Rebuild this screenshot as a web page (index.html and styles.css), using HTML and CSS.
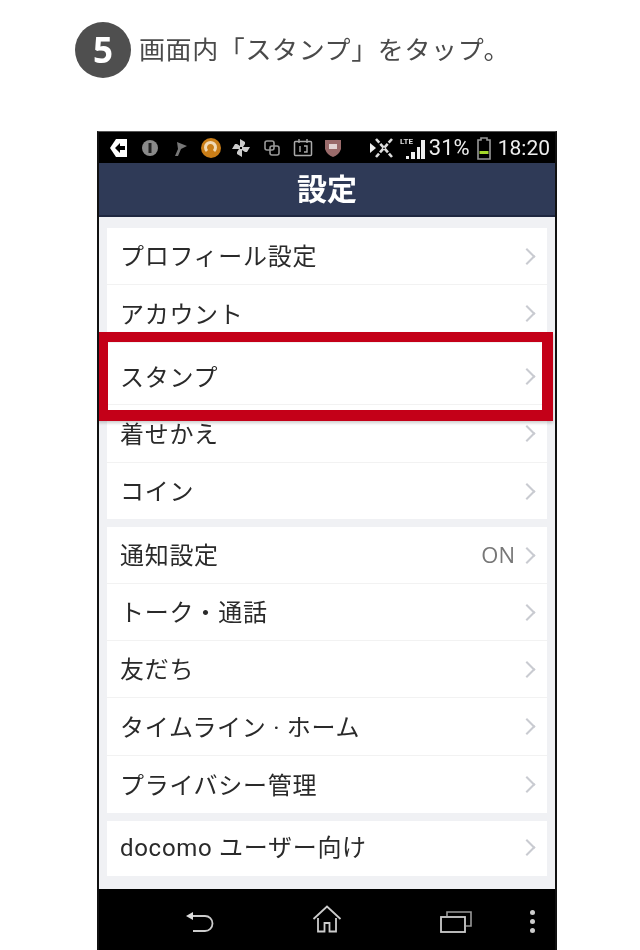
FILE: index.html
```html
<!DOCTYPE html>
<html lang="ja">
<head>
    <meta charset="UTF-8">
    <meta name="viewport" content="width=device-width, initial-scale=1.0">
    <title>スタンプ</title>
    <link rel="stylesheet" href="styles.css">
</head>
<body>
    <div class="step">
        <span class="step-num">5</span>
        <p class="step-text">画面内「スタンプ」をタップ。</p>
    </div>

    <div class="phone">
        <div class="status">
            <div class="status-left">
                <svg viewBox="0 0 20 20"><path d="M7 1h11v18H7l-6-9z" fill="#fff"/><path d="M6 10l5-5v3h5v4h-5v3z" fill="#000"/></svg>
                <svg viewBox="0 0 20 20"><circle cx="10" cy="10" r="8" fill="#8a8a8a"/><rect x="8.500" y="5" width="3" height="10" fill="#222"/></svg>
                <svg viewBox="0 0 20 20"><path d="M5 18l3-7-1-7 10 4-6 3-3 7z" fill="#777"/></svg>
                <svg viewBox="0 0 20 20"><circle cx="10" cy="10" r="10" fill="#c97d17"/><path d="M6 13a5 5 0 1 1 7 0" fill="none" stroke="#f0d9b5" stroke-width="3"/></svg>
                <svg viewBox="0 0 20 20"><path d="M9 9V1l5 3v2l-2 3zM11 9h8l-3 5h-2l-3-2zM11 11v8l-5-3v-2l2-3zM9 11H1l3-5h2l3 2z" fill="#ccc"/></svg>
                <svg viewBox="0 0 20 20"><rect x="3" y="3" width="9" height="9" rx="2" fill="none" stroke="#999" stroke-width="1.600"/><rect x="8" y="8" width="9" height="9" rx="2" fill="none" stroke="#999" stroke-width="1.600"/></svg>
                <svg viewBox="0 0 20 20"><rect x="1.500" y="3.500" width="17" height="14" rx="1" fill="none" stroke="#aaa" stroke-width="1.500"/><path d="M6 1v4M14 1v4M7 8v6M11 8h3v6h-3" fill="none" stroke="#aaa" stroke-width="1.400"/></svg>
                <svg viewBox="0 0 20 20"><path d="M2 2h16v9q-2 6-8 8-6-2-8-8z" fill="#9a6b6b"/><path d="M6 6h8v5H6z" fill="#e2d4d4"/></svg>
            </div>
            <div class="status-right">
                <svg class="ic-vib" viewBox="0 0 26 24"><path d="M6 3l16 18M22 3L6 21" stroke="#ddd" stroke-width="2.600" stroke-dasharray="5 1.500"/><path d="M0 7l6 5-6 5z" fill="#eee"/></svg>
                <svg class="ic-sig" viewBox="0 0 26 24"><text x="0" y="8" class="lte">LTE</text><path d="M6 20h3v3H6zM11 16h4v7h-4zM17 11h3v12h-3zM21 4h4v19h-4z" fill="#eee"/></svg>
                <span class="pct">31%</span>
                <svg class="ic-bat" viewBox="0 0 14 24"><path d="M4 2h6v2h3v19H1V4h3z" fill="none" stroke="#999" stroke-width="1.600"/><rect x="2.500" y="15" width="9" height="3" fill="#a4d82a"/></svg>
                <span class="time">18:20</span>
            </div>
        </div>

        <div class="nav"><h1>設定</h1></div>

        <div class="content">
            <div class="group">
                <div class="row">プロフィール設定<i class="chev"></i></div>
                <div class="row row-58">アカウント<i class="chev"></i></div>
                <div class="row row-stamp">スタンプ<i class="chev"></i></div>
                <div class="row row-58">着せかえ<i class="chev"></i></div>
                <div class="row row-56">コイン<i class="chev"></i></div>
            </div>
            <div class="group">
                <div class="row">通知設定<span class="val">ON</span><i class="chev"></i></div>
                <div class="row">トーク・通話<i class="chev"></i></div>
                <div class="row">友だち<i class="chev"></i></div>
                <div class="row row-58">タイムライン · ホーム<i class="chev"></i></div>
                <div class="row">プライバシー管理<i class="chev"></i></div>
            </div>
            <div class="group">
                <div class="row row-55">docomo ユーザー向け<i class="chev"></i></div>
            </div>
        </div>

        <div class="softkeys">
            <svg class="key-back" viewBox="0 0 30 22"><path d="M3 5h17a7.500 7.500 0 0 1 0 15H8" fill="none" stroke="#ccc" stroke-width="1.800"/><path d="M1 5l7-4v8z" fill="#ddd"/></svg>
            <svg class="key-home" viewBox="0 0 30 28"><path d="M1.500 14L15 1.500 28.500 14M6 13v13.500h6.500V18h5v8.500H24V13" fill="none" stroke="#ccc" stroke-width="1.800"/></svg>
            <svg class="key-recent" viewBox="0 0 32 22"><rect x="1" y="6" width="24" height="15" fill="none" stroke="#ccc" stroke-width="1.800"/><path d="M7 5V1h24v14h-5" fill="none" stroke="#999" stroke-width="1.600"/></svg>
            <div class="key-menu"><b></b><b></b><b></b></div>
        </div>

        <div class="highlight"></div>
    </div>
</body>
</html>
```

FILE: styles.css
```css
html, body {
    height: 950px;
    overflow: hidden;
}
body {
    margin: 0;
    background-color: #ffffff;
    font-family: "Noto Sans CJK JP", "Noto Sans", sans-serif;
}
.step {
    display: flex;
    align-items: center;
    height: 56px;
    padding: 22px 0 0 75px;
    filter: blur(0.6px);
}
.step-num {
    width: 56px;
    height: 56px;
    border-radius: 50%;
    background-color: #4f4f4f;
    color: #fff;
    font-family: "Open Sans", sans-serif;
    font-size: 35px;
    font-weight: 700;
    line-height: 56px;
    text-align: center;
}
.step-text {
    margin: 0 0 4px 8px;
    font-size: 25px;
    letter-spacing: 0.6px;
    color: #4a4a4a;
    white-space: nowrap;
    transform-origin: left center;
    transform: scaleX(1.04);
}
.phone {
    position: relative;
    box-sizing: border-box;
    width: 460px;
    height: 819px;
    margin: 53px 0 0 97px;
    border-left: 2px solid #111;
    border-right: 2px solid #111;
    border-top: 1px solid #555;
    overflow: hidden;
}
.status {
    display: flex;
    align-items: center;
    justify-content: space-between;
    height: 31px;
    background-color: #000;
    filter: blur(0.6px);
}
.status-left {
    display: flex;
    gap: 10.6px;
    padding-left: 10px;
}
.status-left svg {
    width: 20px;
    height: 20px;
}
.status-right {
    display: flex;
    align-items: center;
    padding-right: 5px;
    color: #eee;
    font-family: "Roboto", sans-serif;
    font-size: 21px;
}
.ic-vib {
    width: 26px;
    height: 24px;
    margin-right: 4px;
}
.ic-sig {
    width: 26px;
    height: 24px;
    margin-right: 3px;
}
.lte {
    font-family: "Roboto", sans-serif;
    font-size: 8px;
    font-weight: 700;
    fill: #ddd;
}
.pct {
    margin-right: 7px;
    font-size: 22px;
}
.ic-bat {
    width: 14px;
    height: 24px;
    margin-right: 7px;
}
.nav {
    display: flex;
    align-items: center;
    justify-content: center;
    box-sizing: border-box;
    height: 54px;
    padding-bottom: 4px;
    background-color: #2f3a57;
    border-bottom: 2px solid #1f2740;
    filter: blur(0.6px);
}
.nav h1 {
    margin: 0;
    color: #fff;
    font-size: 30px;
    font-weight: 700;
}
.content {
    display: flex;
    flex-direction: column;
    gap: 8px;
    box-sizing: border-box;
    height: 672px;
    padding: 11px 8px 0;
    background-color: #f0f1f4;
    filter: blur(0.6px);
}
.group {
    background-color: #fff;
}
.row {
    display: flex;
    align-items: center;
    box-sizing: border-box;
    height: 57px;
    padding: 0 11px 3px 13px;
    border-bottom: 1px solid #f2f2f2;
    color: #2a2a2a;
    font-family: "Roboto", "Noto Sans CJK JP", sans-serif;
    font-size: 24px;
    letter-spacing: 0.7px;
    white-space: nowrap;
}
.row:last-child {
    border-bottom: 0;
}
.row-58 {
    height: 58px;
}
.row-56 {
    height: 56px;
}
.row-55 {
    height: 55px;
    padding-bottom: 6px;
}
.row-stamp {
    height: 62px;
    padding: 3px 11px 0 13px;
}
.chev {
    width: 10px;
    height: 10px;
    margin-left: auto;
    border-top: 2px solid #c9cbd1;
    border-right: 2px solid #c9cbd1;
    transform: translate(-3px, 1.5px) rotate(45deg);
}
.val {
    margin-left: auto;
    margin-right: 9px;
    color: #777;
    font-family: "Open Sans", sans-serif;
    font-size: 22px;
    letter-spacing: 0;
}
.val + .chev {
    margin-left: 0;
}
.softkeys {
    position: relative;
    height: 61px;
    background-color: #000;
    filter: blur(0.6px);
}
.softkeys svg {
    position: absolute;
}
.key-back {
    left: 86px;
    top: 22px;
    width: 30px;
    height: 22px;
}
.key-home {
    left: 213px;
    top: 16px;
    width: 30px;
    height: 28px;
}
.key-recent {
    left: 341px;
    top: 22px;
    width: 32px;
    height: 22px;
}
.key-menu {
    position: absolute;
    left: 431px;
    top: 21px;
    display: flex;
    flex-direction: column;
    gap: 4px;
}
.key-menu b {
    width: 5px;
    height: 5px;
    background-color: #ccc;
    border-radius: 50%;
}
.highlight {
    position: absolute;
    left: -1px;
    top: 200px;
    box-sizing: border-box;
    width: 455px;
    height: 89px;
    border: 10px solid #c40018;
    border-right-width: 11px;
    border-bottom-width: 11px;
    box-shadow: 0 2px 3px rgba(0, 0, 0, 0.2);
}
```
